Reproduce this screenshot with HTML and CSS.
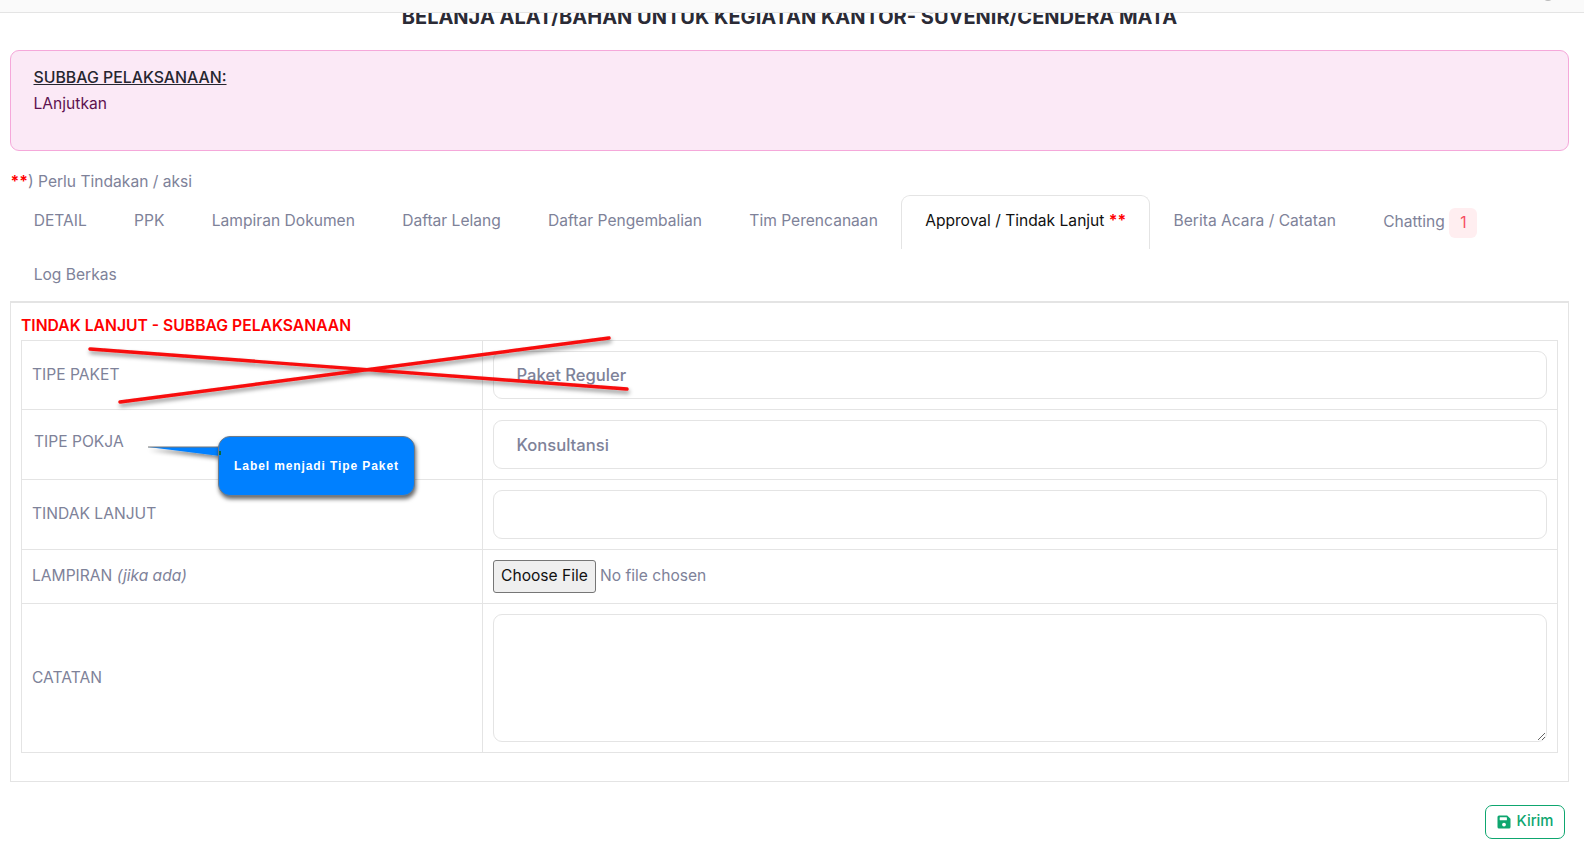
FILE: index.html
```html
<!DOCTYPE html>
<html lang="id">
<head>
<meta charset="utf-8">
<title>Tindak Lanjut</title>
<link rel="stylesheet" href="styles.css">
</head>
<body>
<header class="topbar"><span class="topbar-dot"></span></header>
<main class="page">
  <h1 class="title">BELANJA ALAT/BAHAN UNTUK KEGIATAN KANTOR- SUVENIR/CENDERA MATA</h1>
  <section class="alert">
    <p class="alert-head">SUBBAG PELAKSANAAN:</p>
    <p class="alert-body">LAnjutkan</p>
  </section>
  <p class="legend"><span class="req">**</span>) Perlu Tindakan / aksi</p>
  <nav class="tabs">
    <a class="tab">DETAIL</a>
    <a class="tab">PPK</a>
    <a class="tab">Lampiran Dokumen</a>
    <a class="tab">Daftar Lelang</a>
    <a class="tab">Daftar Pengembalian</a>
    <a class="tab">Tim Perencanaan</a>
    <a class="tab active">Approval / Tindak Lanjut <span class="req">**</span></a>
    <a class="tab">Berita Acara / Catatan</a>
    <a class="tab tab-chat">Chatting <span class="badge">1</span></a>
    <a class="tab">Log Berkas</a>
  </nav>
  <section class="panel">
    <h2 class="panel-title">TINDAK LANJUT - SUBBAG PELAKSANAAN</h2>
    <table class="form-table">
      <tr class="row-a"><th>TIPE PAKET</th><td><div class="field">Paket Reguler</div></td></tr>
      <tr class="row-b"><th class="nudge">TIPE POKJA</th><td><div class="field">Konsultansi</div></td></tr>
      <tr class="row-b"><th>TINDAK LANJUT</th><td><div class="field"></div></td></tr>
      <tr class="row-c"><th>LAMPIRAN <em>(jika ada)</em></th><td><div class="file"><button class="file-btn" type="button">Choose File</button><span class="file-name">No file chosen</span></div></td></tr>
      <tr class="row-d"><th>CATATAN</th><td><textarea class="area"></textarea></td></tr>
    </table>
  </section>
  <div class="actions">
    <button class="send" type="button">
      <svg class="send-icon" viewBox="0 0 14 14" width="14" height="14"><path d="M2 0.5H10.2L13.5 3.8V12a1.5 1.5 0 0 1-1.5 1.5H2A1.5 1.5 0 0 1 .5 12V2A1.5 1.5 0 0 1 2 .5Z" fill="#0ea66f"/><rect x="2.7" y="2.3" width="7.2" height="3" rx=".5" fill="#fff"/><circle cx="7" cy="9.6" r="1.9" fill="#fff"/></svg>
      <span class="send-label">Kirim</span>
    </button>
  </div>
</main>
<svg class="overlay" width="1584" height="841" viewBox="0 0 1584 841">
  <defs>
    <filter id="sh" x="-20%" y="-50%" width="140%" height="250%"><feDropShadow dx="1" dy="3" stdDeviation="2" flood-color="#000" flood-opacity=".45"/></filter>
  </defs>
  <g filter="url(#sh)" stroke="#f70a0a" stroke-width="3.4" stroke-linecap="round">
    <line x1="90" y1="349" x2="627" y2="389"/>
    <line x1="609" y1="338" x2="120" y2="402"/>
  </g>
  <path filter="url(#sh)" d="M148 447 L220 447 L220 456 Z" fill="#0080ff"/>
  <path d="M148 447 L219 447" stroke="#777" stroke-width="1" fill="none"/>
</svg>
<div class="callout">Label menjadi Tipe Paket<span class="callout-mark"></span></div>
</body>
</html>
```
FILE: styles.css
```css
* { box-sizing: border-box; }
html, body { margin: 0; padding: 0; background: #fff; }
body { font-family: Inter, "Liberation Sans", sans-serif; font-size: 15.6px; color: #7e8299; height: 841px; overflow: hidden; }
p, h1, h2 { margin: 0; }

.topbar { position: absolute; top: 0; left: 0; width: 100%; height: 13px; background: #fafafa; border-bottom: 1px solid #e4e4e4; z-index: 2; overflow: hidden; }
.topbar-dot { position: absolute; right: 30px; top: -11px; width: 12px; height: 12px; border-radius: 50%; background: #bbb; }

.page { padding: 5px 15px 0 10px; }
.title { font-size: 20px; line-height: 24px; font-weight: 700; color: #2b2b36; text-align: center; }

.alert { margin-top: 21px; height: 101px; padding: 16px 22.5px; background: #fbe9f6; border: 1px solid #f5a8da; border-radius: 9px; color: #5e1250; }
.alert-head { font-size: 15.85px; font-weight: 500; color: #262630; text-decoration: underline; line-height: 21px; }
.alert-body { line-height: 22px; margin-top: 5px; }

.legend { margin: 21px 0 0 .5px; line-height: 20px; }
.req { color: #ff0000; font-weight: 700; }

.tabs { display: flex; flex-wrap: wrap; margin-top: 3px; height: 105px; align-content: flex-start; }
.tab { display: flex; align-items: center; height: 54px; padding: 0 22.65px 5px; border: 1px solid transparent; border-bottom: 0; white-space: pre; }
.tab.active { color: #111; background: #fff; border-color: #e4e4e4; border-radius: 9px 9px 0 0; }
.tab-chat { padding-bottom: 3px; }
.badge { display: inline-flex; align-items: center; justify-content: center; width: 28px; height: 30px; margin-top: 3px; border-radius: 6px; background: #ffeef0; color: #f64e60; }

.panel { height: 481px; border: 1px solid #e4e4e4; border-top-width: 2px; padding: 10px 10px 0; margin-top: 1px; }
.panel-title { font-size: 15.7px; font-weight: 600; color: #ff0000; line-height: 26px; }

.form-table { width: 1537px; margin-top: 1px; border-collapse: collapse; table-layout: fixed; }
.form-table th, .form-table td { border: 1px solid #e4e4e4; padding: 0 10px; vertical-align: middle; }
.form-table th { width: 461px; font-weight: 400; text-align: left; padding-bottom: 2px; }
.form-table th.nudge { padding-left: 12px; padding-bottom: 7px; }
.form-table em { font-style: italic; }
.row-a { height: 69px; }
.row-b { height: 70px; }
.row-c { height: 54px; }
.row-d { height: 149px; }

.field { height: 48px; padding: 0 22.5px; display: flex; align-items: center; border: 1px solid #e4e4e4; border-radius: 9px; font-size: 16.6px; font-weight: 500; }
.row-b .field { height: 49px; }
.file { display: flex; align-items: center; gap: 4px; }
.file-btn { width: 103px; height: 33px; padding: 0 0 2px; background: #efefef; border: 1px solid #767676; border-radius: 3px; font: 15.6px Inter, "Liberation Sans", sans-serif; color: #111; }
.file-name { font-size: 15.6px; padding-bottom: 2px; }
.area { display: block; width: 100%; height: 128px; margin-bottom: 1px; border: 1px solid #e4e4e4; border-radius: 9px; background: #fff; }

.actions { display: flex; justify-content: flex-end; margin-top: 23px; padding-right: 4px; }
.send { display: flex; align-items: center; gap: 6px; width: 80px; height: 34px; justify-content: center; background: #fff; border: 1px solid #0ea66f; border-radius: 7px; color: #0ea66f; font: 500 14.8px Inter, "Liberation Sans", sans-serif; }
.send-label { padding-bottom: 2px; }

.overlay { position: absolute; top: 0; left: 0; z-index: 3; pointer-events: none; }
.callout { position: absolute; left: 218px; top: 436px; width: 197px; height: 60px; display: flex; align-items: center; justify-content: center; background: #0080ff; border: 1px solid #6f7b88; border-radius: 12px; box-shadow: 1px 3px 4px rgba(0,0,0,.6); color: #fff; font: 700 12px "Liberation Sans", sans-serif; letter-spacing: .9px; z-index: 4; }
.callout-mark { position: absolute; left: 0; top: 14px; width: 2px; height: 4px; background: #0a6a3a; }
```
